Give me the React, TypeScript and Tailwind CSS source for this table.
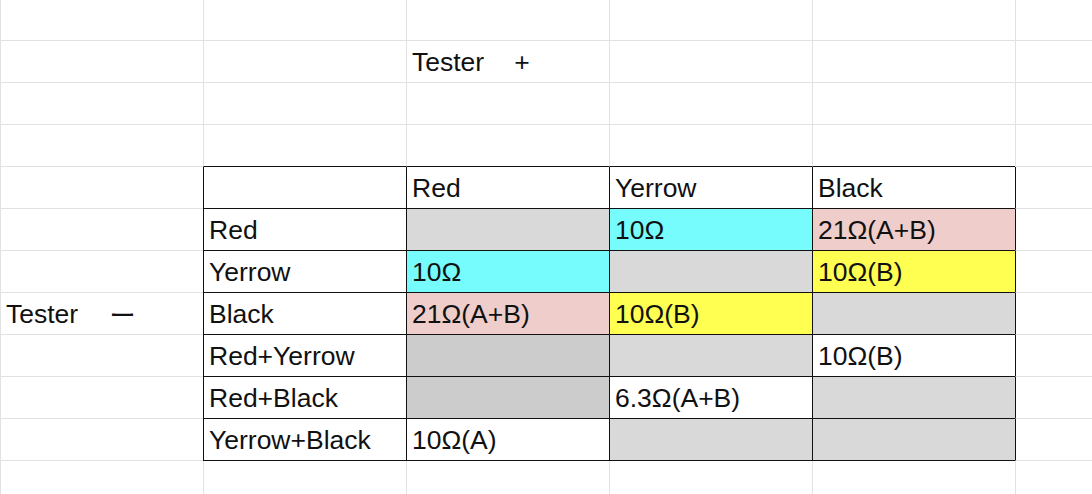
import React from "react";

type Fill = "none" | "gray" | "dark" | "cyan" | "pink" | "yellow";

type Cell = { text?: React.ReactNode; fill?: Fill };

const fills: Record<Fill, string> = {
  none: "bg-white",
  gray: "bg-[#d9d9d9]",
  dark: "bg-[#cccccc]",
  cyan: "bg-[#77fcfd]",
  pink: "bg-[#efcdcb]",
  yellow: "bg-[#ffff52]",
};

const ROWS = 12;
const COLS = 6;

// key = "row-col" of the sheet
const sheet: Record<string, Cell> = {
  "1-2": {
    text: (
      <>
        <span>Tester</span>
        <span className="ml-[30px]">+</span>
      </>
    ),
  },
  "4-2": { text: "Red" },
  "4-3": { text: "Yerrow" },
  "4-4": { text: "Black" },
  "5-1": { text: "Red" },
  "5-2": { fill: "gray" },
  "5-3": { text: "10Ω", fill: "cyan" },
  "5-4": { text: "21Ω(A+B)", fill: "pink" },
  "6-1": { text: "Yerrow" },
  "6-2": { text: "10Ω", fill: "cyan" },
  "6-3": { fill: "gray" },
  "6-4": { text: "10Ω(B)", fill: "yellow" },
  "7-0": {
    text: (
      <>
        <span>Tester</span>
        <span className="ml-[31px] font-['Noto_Sans_CJK_JP',sans-serif]">ー</span>
      </>
    ),
  },
  "7-1": { text: "Black" },
  "7-2": { text: "21Ω(A+B)", fill: "pink" },
  "7-3": { text: "10Ω(B)", fill: "yellow" },
  "7-4": { fill: "gray" },
  "8-1": { text: "Red+Yerrow" },
  "8-2": { fill: "dark" },
  "8-3": { fill: "gray" },
  "8-4": { text: "10Ω(B)" },
  "9-1": { text: "Red+Black" },
  "9-2": { fill: "dark" },
  "9-3": { text: "6.3Ω(A+B)" },
  "9-4": { fill: "gray" },
  "10-1": { text: "Yerrow+Black" },
  "10-2": { text: "10Ω(A)" },
  "10-3": { fill: "gray" },
  "10-4": { fill: "gray" },
};

const inTableLeft = (r: number, c: number) => r >= 4 && r <= 10 && c >= 1 && c <= 5;
const inTableBottom = (r: number, c: number) => r >= 3 && r <= 10 && c >= 1 && c <= 4;

export default function App() {
  const cells = [];
  for (let r = 0; r < ROWS; r++) {
    for (let c = 0; c < COLS; c++) {
      const cell = sheet[`${r}-${c}`] ?? {};
      const left = inTableLeft(r, c) ? "border-l-[#111]" : "border-l-[#e2e2e2]";
      const bottom = inTableBottom(r, c) ? "border-b-[#111]" : "border-b-[#e2e2e2]";
      cells.push(
        <div
          key={`${r}-${c}`}
          className={`flex items-end overflow-hidden whitespace-nowrap border-l border-b pl-[5px] pb-[6px] ${left} ${bottom} ${fills[cell.fill ?? "none"]}`}
        >
          {cell.text}
        </div>
      );
    }
  }

  return (
    <div className="grid h-[494px] w-[1092px] grid-cols-[203px_203px_203px_203px_203px_77px] grid-rows-[41px_repeat(10,42px)_34px] overflow-hidden bg-white font-['Liberation_Sans',Arial,sans-serif] text-[26.5px] leading-[28px] text-[#111]">
      {cells}
    </div>
  );
}
